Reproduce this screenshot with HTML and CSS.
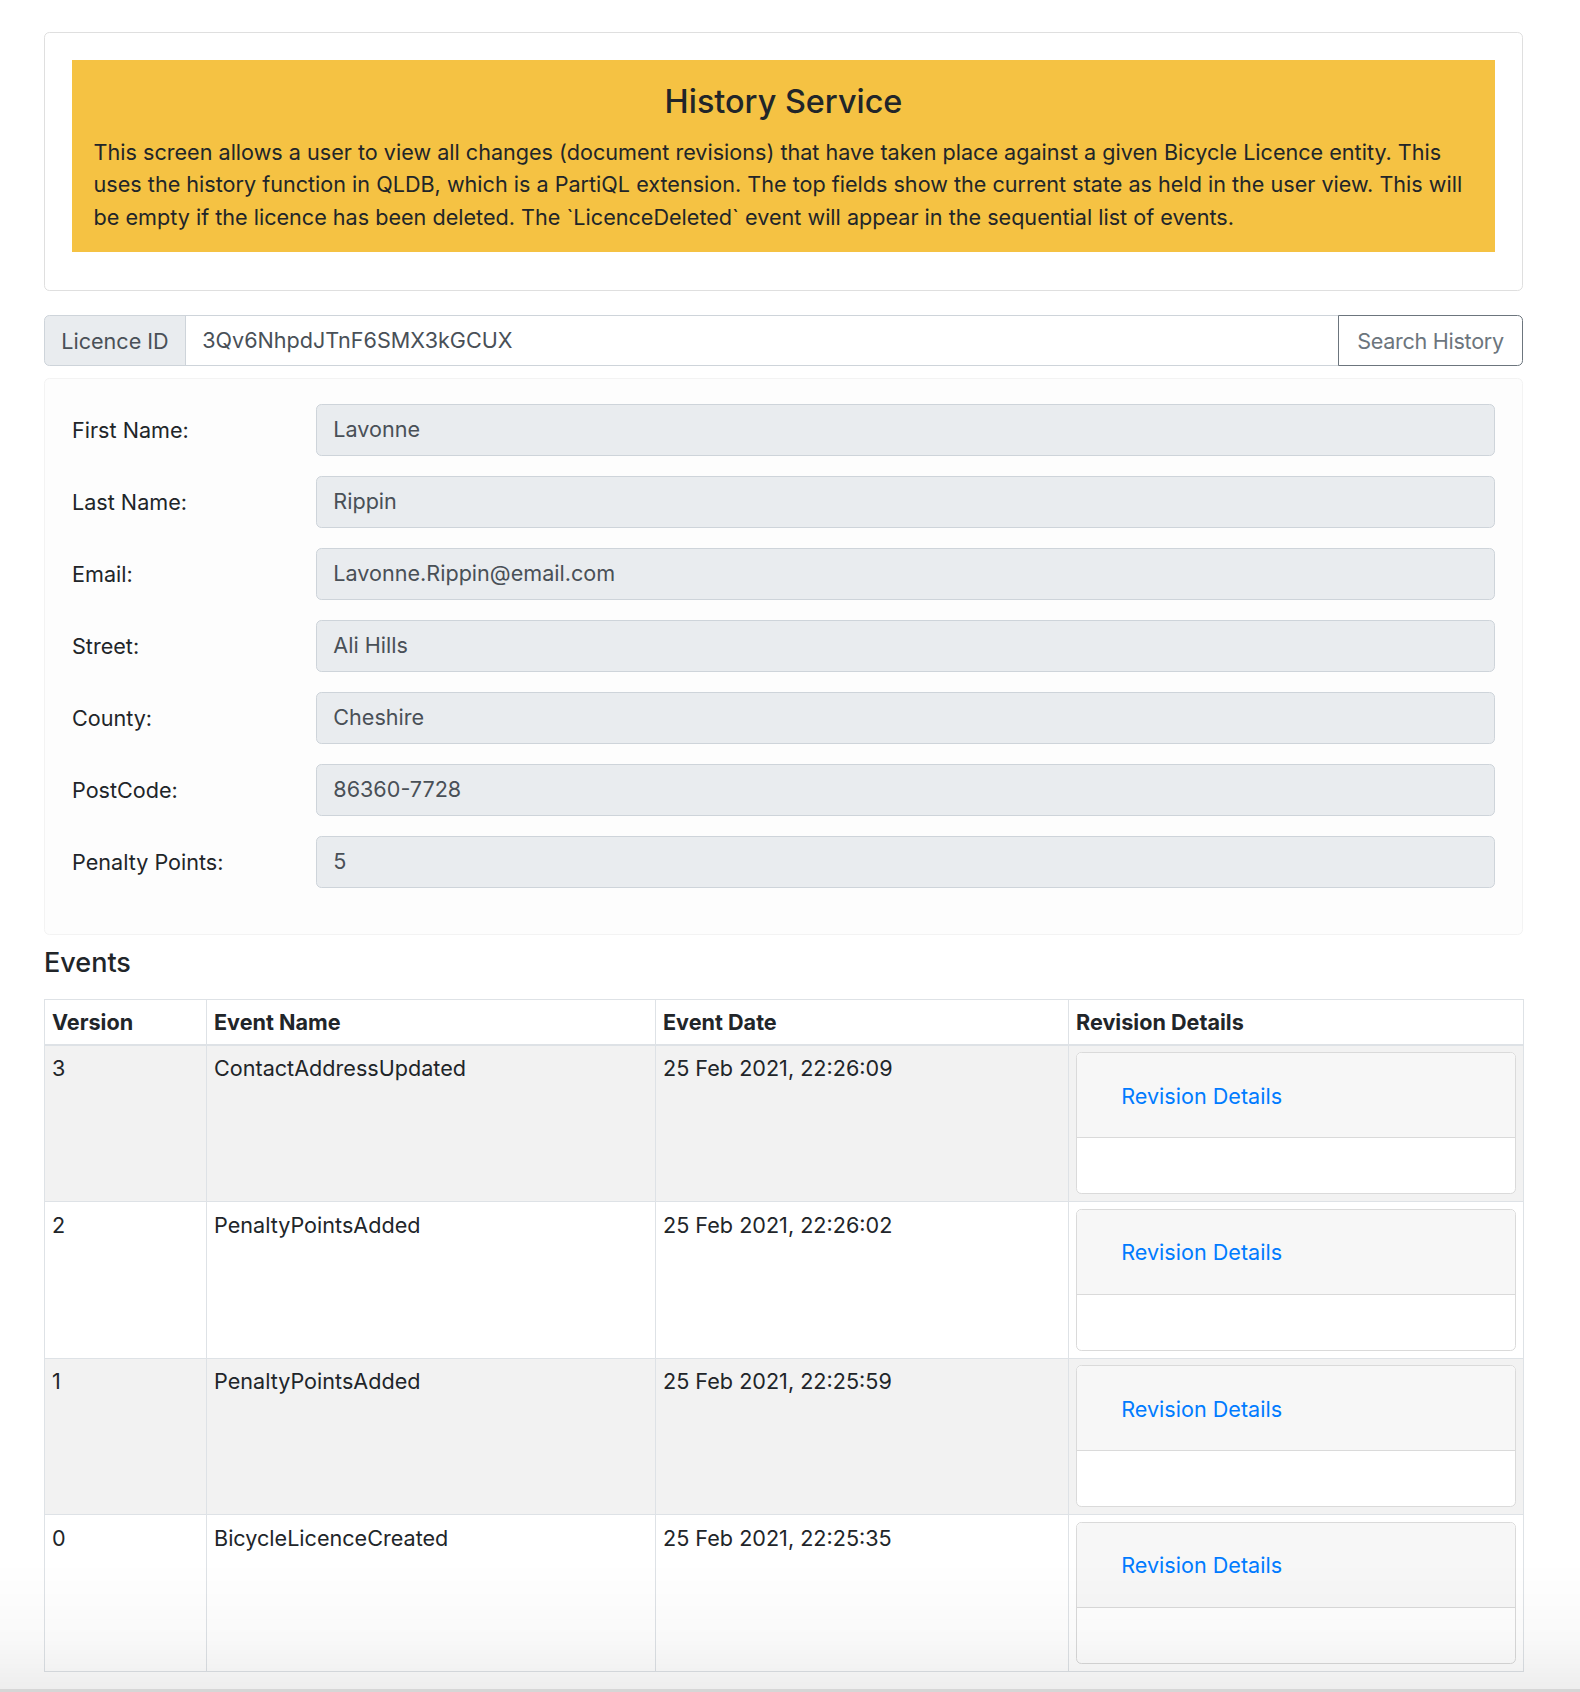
FILE: index.html
```html
<!DOCTYPE html>
<html lang="en">
<head>
<meta charset="utf-8">
<title>History Service</title>
<link rel="stylesheet" href="styles.css">
</head>
<body>
<div class="page">
  <section class="intro-card">
    <div class="alert">
      <h4 class="alert-title">History Service</h4>
      <p class="alert-text">This screen allows a user to view all changes (document revisions) that have taken place against a given Bicycle Licence entity. This uses the history function in QLDB, which is a PartiQL extension. The top fields show the current state as held in the user view. This will be empty if the licence has been deleted. The `LicenceDeleted` event will appear in the sequential list of events.</p>
    </div>
  </section>

  <div class="search-group">
    <span class="search-label">Licence ID</span>
    <input class="search-input" type="text" value="3Qv6NhpdJTnF6SMX3kGCUX">
    <button class="search-button" type="button">Search History</button>
  </div>

  <section class="form-card">
    <div class="form-row"><label class="form-label">First Name:</label><input class="form-field" type="text" value="Lavonne" readonly></div>
    <div class="form-row"><label class="form-label">Last Name:</label><input class="form-field" type="text" value="Rippin" readonly></div>
    <div class="form-row"><label class="form-label">Email:</label><input class="form-field" type="text" value="Lavonne.Rippin@email.com" readonly></div>
    <div class="form-row"><label class="form-label">Street:</label><input class="form-field" type="text" value="Ali Hills" readonly></div>
    <div class="form-row"><label class="form-label">County:</label><input class="form-field" type="text" value="Cheshire" readonly></div>
    <div class="form-row"><label class="form-label">PostCode:</label><input class="form-field" type="text" value="86360-7728" readonly></div>
    <div class="form-row"><label class="form-label">Penalty Points:</label><input class="form-field" type="text" value="5" readonly></div>
  </section>

  <h5 class="events-title">Events</h5>

  <table class="events-table">
    <colgroup>
      <col class="col-version">
      <col class="col-name">
      <col class="col-date">
      <col class="col-rev">
    </colgroup>
    <thead>
      <tr><th>Version</th><th>Event Name</th><th>Event Date</th><th>Revision Details</th></tr>
    </thead>
    <tbody>
      <tr>
        <td>3</td><td>ContactAddressUpdated</td><td>25 Feb 2021, 22:26:09</td>
        <td><div class="rev-card"><div class="rev-header"><button class="rev-link" type="button">Revision Details</button></div><div class="rev-body"></div></div></td>
      </tr>
      <tr>
        <td>2</td><td>PenaltyPointsAdded</td><td>25 Feb 2021, 22:26:02</td>
        <td><div class="rev-card"><div class="rev-header"><button class="rev-link" type="button">Revision Details</button></div><div class="rev-body"></div></div></td>
      </tr>
      <tr>
        <td>1</td><td>PenaltyPointsAdded</td><td>25 Feb 2021, 22:25:59</td>
        <td><div class="rev-card"><div class="rev-header"><button class="rev-link" type="button">Revision Details</button></div><div class="rev-body"></div></div></td>
      </tr>
      <tr>
        <td>0</td><td>BicycleLicenceCreated</td><td>25 Feb 2021, 22:25:35</td>
        <td><div class="rev-card"><div class="rev-header"><button class="rev-link" type="button">Revision Details</button></div><div class="rev-body"></div></div></td>
      </tr>
    </tbody>
  </table>
</div>
<div class="window-fade"></div>
</body>
</html>
```
FILE: styles.css
```css
* { box-sizing: border-box; }

html, body {
  margin: 0;
  padding: 0;
  background: #ffffff;
}

body {
  font-family: Inter, "Noto Sans", "Liberation Sans", sans-serif;
  font-size: 21.6px;
  line-height: 1.5;
  color: #212529;
  height: 1692px;
  overflow: hidden;
}

.page {
  width: 1479px;
  margin-left: 44px;
  padding-top: 32px;
}

/* Intro card */
.intro-card {
  border: 1px solid #dfdfdf;
  border-radius: 5.4px;
  padding: 27px 27px 38px;
}

.alert {
  background: #f5c243;
  padding: 23px 21.6px 19px;
}

.alert-title {
  margin: 0 0 14px;
  font-size: 32.4px;
  font-weight: 500;
  line-height: 1.2;
  text-align: center;
  color: #212529;
}

.alert-text {
  margin: 0;
  color: #212529;
}

/* Search input group */
.search-group {
  display: flex;
  height: 51.3px;
  margin-top: 24px;
}

.search-label {
  display: flex;
  align-items: center;
  width: 142px;
  padding: 0 16.2px;
  background: #e9ecef;
  border: 1px solid #ced4da;
  border-radius: 5.4px 0 0 5.4px;
  color: #495057;
  font-size: 21.6px;
  white-space: nowrap;
}

.search-input {
  flex: 1;
  min-width: 0;
  margin: 0 0 0 -1px;
  padding: 0 16.2px 2px;
  border: 1px solid #ced4da;
  background: #ffffff;
  color: #495057;
  font-family: inherit;
  font-size: 21.6px;
  outline: none;
}

.search-button {
  flex: 0 0 185px;
  margin-left: -1px;
  padding: 0;
  background: #ffffff;
  border: 1.5px solid #6c757d;
  border-radius: 0 5.4px 5.4px 0;
  color: #6c757d;
  font-family: inherit;
  font-size: 21.6px;
  line-height: 1.5;
  letter-spacing: -0.3px;
  white-space: nowrap;
  text-align: center;
}

/* Form card */
.form-card {
  margin-top: 12px;
  padding: 25px 27px 26px;
  border: 1px solid #f3f3f3;
  border-radius: 5.4px;
  background: #fdfdfd;
}

.form-row {
  display: grid;
  grid-template-columns: 203.6px 1fr;
  column-gap: 40.5px;
  align-items: center;
  margin-bottom: 20.7px;
}

.form-label {
  color: #212529;
}

.form-field {
  height: 51.3px;
  width: 100%;
  padding: 0 16.2px 1px;
  background: #e9ecef;
  border: 1px solid #ced4da;
  border-radius: 5.4px;
  color: #495057;
  font-family: inherit;
  font-size: 21.6px;
  outline: none;
}

/* Events */
.events-title {
  margin: 12px 0 19px;
  font-size: 27px;
  font-weight: 500;
  line-height: 1.2;
}

.events-table {
  width: 1479px;
  border-collapse: collapse;
  table-layout: fixed;
}

.col-version { width: 162px; }
.col-name { width: 449px; }
.col-date { width: 413px; }
.col-rev { width: 455px; }

.events-table th,
.events-table td {
  border: 1px solid #dee2e6;
  padding: 6.5px 7px 7px;
  text-align: left;
  vertical-align: top;
}

.events-table th {
  padding-top: 6px;
  padding-bottom: 5.5px;
  font-weight: 700;
  border-bottom-width: 2px;
}

.events-table tbody tr:nth-of-type(odd) {
  background: #f2f2f2;
}

.rev-card {
  background: #ffffff;
  border: 1px solid #dadada;
  border-radius: 5.4px;
  overflow: hidden;
}

.rev-header {
  background: #f7f7f7;
  padding: 17.5px 27px 16px;
  border-bottom: 1px solid #dadada;
}

.rev-link {
  display: inline-block;
  padding: 8.1px 16.2px;
  border: 1px solid transparent;
  background: none;
  color: #007bff;
  font-family: inherit;
  font-size: 21.6px;
  line-height: 1.5;
}

.rev-body {
  height: 55px;
}

/* bottom window shade */
.window-fade {
  position: fixed;
  left: 0;
  right: 0;
  bottom: 0;
  height: 130px;
  background: linear-gradient(to bottom, rgba(0, 0, 0, 0) 0%, rgba(0, 0, 0, 0.025) 60%, rgba(0, 0, 0, 0.065) 100%);
  border-bottom: 3px solid #d6d6d6;
  pointer-events: none;
}
```
